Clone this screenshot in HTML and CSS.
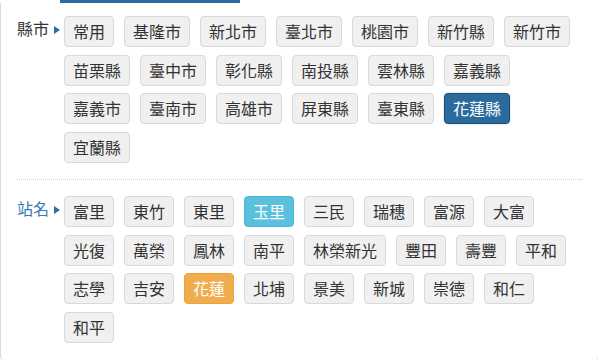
FILE: index.html
```html
<!DOCTYPE html>
<html lang="zh-Hant">
<head>
<meta charset="utf-8">
<title>選擇站名</title>
<link rel="stylesheet" href="styles.css">
</head>
<body>
<div class="tabbar"><span class="tab-indicator"></span></div>
<div class="panel">
  <div class="group">
    <div class="label">縣市<span class="caret"></span></div>
    <div class="options">
      <button class="btn">常用</button>
      <button class="btn">基隆市</button>
      <button class="btn">新北市</button>
      <button class="btn">臺北市</button>
      <button class="btn">桃園市</button>
      <button class="btn">新竹縣</button>
      <button class="btn">新竹市</button>
      <button class="btn">苗栗縣</button>
      <button class="btn">臺中市</button>
      <button class="btn">彰化縣</button>
      <button class="btn">南投縣</button>
      <button class="btn">雲林縣</button>
      <button class="btn">嘉義縣</button>
      <button class="btn">嘉義市</button>
      <button class="btn">臺南市</button>
      <button class="btn">高雄市</button>
      <button class="btn">屏東縣</button>
      <button class="btn">臺東縣</button>
      <button class="btn btn-primary">花蓮縣</button>
      <button class="btn">宜蘭縣</button>
    </div>
  </div>
  <div class="divider"></div>
  <div class="group">
    <div class="label label-link">站名<span class="caret"></span></div>
    <div class="options">
      <button class="btn">富里</button>
      <button class="btn">東竹</button>
      <button class="btn">東里</button>
      <button class="btn btn-info">玉里</button>
      <button class="btn">三民</button>
      <button class="btn">瑞穗</button>
      <button class="btn">富源</button>
      <button class="btn">大富</button>
      <button class="btn">光復</button>
      <button class="btn">萬榮</button>
      <button class="btn">鳳林</button>
      <button class="btn">南平</button>
      <button class="btn">林榮新光</button>
      <button class="btn">豐田</button>
      <button class="btn">壽豐</button>
      <button class="btn">平和</button>
      <button class="btn">志學</button>
      <button class="btn">吉安</button>
      <button class="btn btn-warning">花蓮</button>
      <button class="btn">北埔</button>
      <button class="btn">景美</button>
      <button class="btn">新城</button>
      <button class="btn">崇德</button>
      <button class="btn">和仁</button>
      <button class="btn">和平</button>
    </div>
  </div>
</div>
</body>
</html>
```

FILE: styles.css
```css
* {
  box-sizing: border-box;
}

html, body {
  margin: 0;
  padding: 0;
  overflow: hidden;
  background: #fff;
}

body {
  font-family: "Noto Sans CJK TC", "Noto Sans", sans-serif;
  color: #333;
  width: 598px;
  height: 359px;
}

.tabbar {
  height: 3px;
}

.tab-indicator {
  display: block;
  margin-left: 60px;
  width: 180px;
  height: 3px;
  background: #2a6ca2;
}

.panel {
  width: 599px;
  height: 357px;
  border: 1px solid #dcdcdc;
  border-top: 0;
  border-radius: 0 0 4px 4px;
  padding: 13px 16px 0 16px;
}

.group {
  display: flex;
  align-items: flex-start;
}

.label {
  flex: 0 0 47px;
  display: flex;
  align-items: center;
  padding-top: 2px;
  font-size: 16px;
  line-height: 21px;
  color: #333;
  white-space: nowrap;
}

.label-link {
  color: #337ab7;
}

.caret {
  display: inline-block;
  width: 0;
  height: 0;
  margin-left: 5px;
  margin-top: 2px;
  border-left: 6px solid #2a6ca2;
  border-top: 4px solid transparent;
  border-bottom: 4px solid transparent;
}

.options {
  flex: 1;
  display: flex;
  flex-wrap: wrap;
  column-gap: 10px;
  row-gap: 7.7px;
}

.btn {
  font-family: inherit;
  font-size: 16px;
  line-height: 21px;
  height: 31px;
  padding: 4px 8px;
  margin: 0;
  border: 1px solid #d9d9d9;
  border-radius: 4px;
  background: #f0f0f0;
  color: #333;
  white-space: nowrap;
  cursor: pointer;
}

.btn-primary {
  background: #2a6a9c;
  border-color: #1f4e74;
  color: #fff;
  box-shadow: 0 0 0 1px #e6eef5;
}

.btn-info {
  background: #5bc0de;
  border-color: #46b8da;
  color: #fff;
}

.btn-warning {
  background: #f0ad4e;
  border-color: #eea236;
  color: #fff;
}

.divider {
  margin: 16px 0 16px 0;
  border-top: 1px dotted #cfcfcf;
}
```
